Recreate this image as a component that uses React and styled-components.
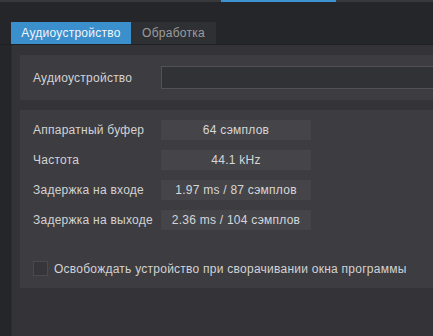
import React from "react";
import styled, { createGlobalStyle } from "styled-components";

const Global = createGlobalStyle`
  html, body { margin: 0; padding: 0; background: #242629; overflow: hidden; }
  body { font-family: "Liberation Sans", Arial, sans-serif; letter-spacing: 0.25px; }
  * { box-sizing: border-box; }
`;

const Page = styled.div`
  width: 433px;
  height: 336px;
  display: flex;
  flex-direction: column;
  overflow: hidden;
  background: #242629;
`;

const TopStrip = styled.div`
  height: 2px;
  background: #38393d;
  display: flex;
  flex-shrink: 0;
`;

const StripSeg = styled.div`
  width: ${(p) => p.$w}px;
  background: ${(p) => (p.$active ? "#3d93d2" : "transparent")};
`;

const TabBar = styled.div`
  display: flex;
  margin-top: 20px;
  padding-left: 11px;
  height: 22px;
  flex-shrink: 0;
  border-bottom: 1px solid #1f2023;
  box-sizing: content-box;
`;

const Tab = styled.div`
  height: 22px;
  width: ${(p) => p.$w}px;
  display: flex;
  align-items: center;
  justify-content: center;
  font-size: 12px;
  background: ${(p) => (p.$active ? "#3b8fcd" : "#2e3033")};
  color: ${(p) => (p.$active ? "#f2f5f8" : "#9c9d9f")};
`;

const Content = styled.div`
  flex: 1;
  margin-left: 11px;
  background: #343438;
  border-left: 1px solid #2b2c2f;
  padding: 10px 0 0 8px;
  display: flex;
  flex-direction: column;
  gap: 10px;
`;

const Panel = styled.div`
  background: #3d3d41;
  padding: ${(p) => p.$pad};
  display: flex;
  flex-direction: column;
  gap: ${(p) => p.$gap || 0}px;
`;

const Row = styled.div`
  display: flex;
  align-items: center;
  height: ${(p) => p.$h}px;
`;

const Label = styled.div`
  width: 128px;
  flex-shrink: 0;
  font-size: 12px;
  color: #d2d2d4;
  white-space: nowrap;
`;

const Input = styled.div`
  flex: 1;
  height: 23px;
  background: #313235;
  border: 1px solid #525256;
  border-right: none;
`;

const ValueBox = styled.div`
  width: 150px;
  height: 20px;
  background: #454549;
  display: flex;
  align-items: center;
  justify-content: center;
  font-size: 12px;
  color: #d6d6d8;
  white-space: nowrap;
`;

const CheckRow = styled.label`
  display: flex;
  align-items: center;
  gap: 6px;
  margin-top: 21px;
  font-size: 12px;
  color: #d2d2d4;
  white-space: nowrap;
`;

const Check = styled.span`
  width: 15px;
  height: 15px;
  background: #363539;
  border: 1px solid #4a4a4e;
  flex-shrink: 0;
`;

const rows = [
  ["Аппаратный буфер", "64 сэмплов"],
  ["Частота", "44.1 kHz"],
  ["Задержка на входе", "1.97 ms / 87 сэмплов"],
  ["Задержка на выходе", "2.36 ms / 104 сэмплов"],
];

export default function App() {
  return (
    <Page>
      <Global />
      <TopStrip>
        <StripSeg $w={221} />
        <StripSeg $w={115} $active />
      </TopStrip>
      <TabBar>
        <Tab $w={120} $active>Аудиоустройство</Tab>
        <Tab $w={85}>Обработка</Tab>
      </TabBar>
      <Content>
        <Panel $pad="0 0 0 13px">
          <Row $h={45}>
            <Label>Аудиоустройство</Label>
            <Input />
          </Row>
        </Panel>
        <Panel $pad="10px 0 12px 13px" $gap={10}>
          {rows.map(([l, v]) => (
            <Row key={l} $h={20}>
              <Label>{l}</Label>
              <ValueBox>{v}</ValueBox>
            </Row>
          ))}
          <CheckRow>
            <Check />
            Освобождать устройство при сворачивании окна программы
          </CheckRow>
        </Panel>
      </Content>
    </Page>
  );
}
